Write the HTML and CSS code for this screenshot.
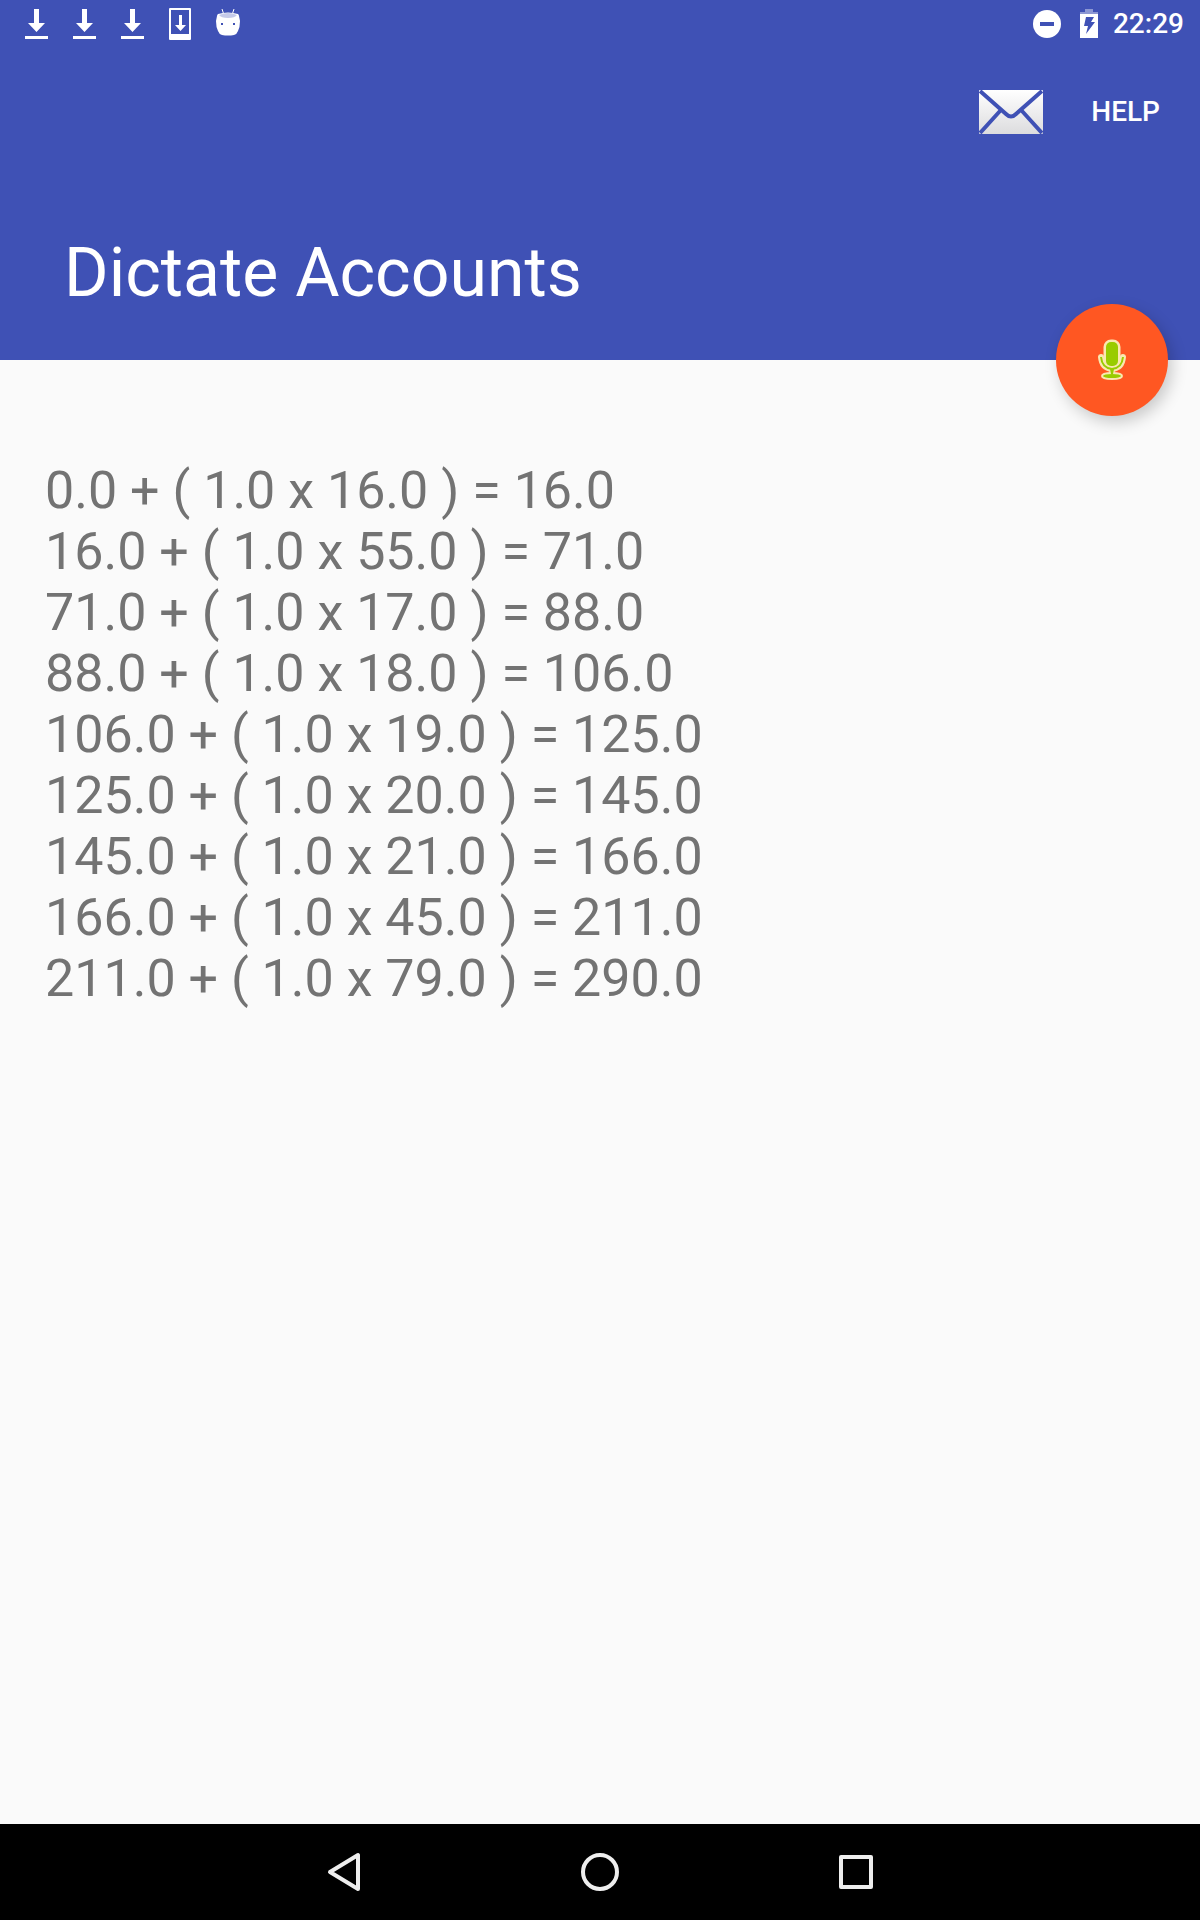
FILE: index.html
```html
<!DOCTYPE html>
<html lang="en">
<head>
    <meta charset="UTF-8">
    <meta name="viewport" content="width=device-width, initial-scale=1.0">
    <title>Dictate Accounts</title>
    <link rel="stylesheet" href="styles.css">
</head>
<body>
<header class="app-bar">
    <!-- Status bar -->
    <div class="status-bar">
        <div class="notifications">
            <svg viewBox="0 0 48 48"><path d="M22 9h5v14h6L24.500 32 16 23h6zM13 36h23v3H13z"/></svg>
            <svg viewBox="0 0 48 48"><path d="M22 9h5v14h6L24.500 32 16 23h6zM13 36h23v3H13z"/></svg>
            <svg viewBox="0 0 48 48"><path d="M22 9h5v14h6L24.500 32 16 23h6zM13 36h23v3H13z"/></svg>
            <svg viewBox="0 0 48 48"><path fill-rule="evenodd" d="M14 8h20q1 0 1 1v30q0 1-1 1H14q-1 0-1-1V9q0-1 1-1zm1 2v24h18V10zM23 15h3v10h4l-5.500 6-5.500-6h4z"/></svg>
            <svg viewBox="0 0 48 48">
                <path d="M18 9l2 6M30 9l-2 6" stroke="#fff" stroke-width="1"/>
                <path d="M13 16q0-1 1-2 10-3 20 0 1 1 1 2l1 5q0 6-2 10-1 3-4 4-6 1-12 0-3-1-4-4-2-4-2-10z"/>
                <path d="M15 15q9-4 18 0-2 3-9 3t-9-3z" fill="#c5cae9"/>
                <path d="M17 23h2v2h-2zM29 23h2v2h-2z" fill="#3f51b5"/>
            </svg>
        </div>
        <div class="system">
            <svg class="dnd" viewBox="0 0 28 28"><circle cx="14" cy="14" r="14"/><path d="M7 12h14v4H7z" fill="#3f51b5"/></svg>
            <svg class="battery" viewBox="0 0 20 30">
                <path d="M6 0h8v3h5v3H1V3h5z" fill="#8c97d3"/>
                <path d="M1 5h18v24H1z"/>
                <path d="M7 8h8l-3 5h4L7 25l2-8H5z" fill="#3f51b5"/>
            </svg>
            <span class="clock">22:29</span>
        </div>
    </div>

    <!-- Toolbar -->
    <div class="toolbar">
        <button class="mail-button" aria-label="Send mail">
            <svg viewBox="0 0 64 44">
                <defs>
                    <linearGradient id="paper" x1="0" y1="0" x2="0" y2="1">
                        <stop offset="0" stop-color="#fff"/>
                        <stop offset="1" stop-color="#dcdcde"/>
                    </linearGradient>
                </defs>
                <rect width="64" height="44" rx="1" fill="url(#paper)"/>
                <path d="M1 1l26 23q5 5 10 0L63 1M1 43l20-22M63 43L43 21" fill="none" stroke="#3f51b5" stroke-width="4"/>
            </svg>
        </button>
        <button class="help-button">HELP</button>
    </div>

    <h1>Dictate Accounts</h1>

    <button class="fab" aria-label="Dictate">
        <svg viewBox="0 0 28 42">
            <g fill="none" stroke="#f9e8b0" stroke-linecap="round">
                <rect x="8" y="3" width="12" height="24" rx="5" stroke-width="5"/>
                <path d="M3 18q1 11 11 12 10-1 11-12M14 30v5" stroke-width="6"/>
                <ellipse cx="14" cy="37" rx="9" ry="2" stroke-width="4"/>
            </g>
            <g fill="#99cc00" stroke="#99cc00">
                <rect x="8" y="3" width="12" height="24" rx="5" stroke="none"/>
                <path d="M3 18q1 11 11 12 10-1 11-12" fill="none" stroke-width="2"/>
                <path d="M12 30h4l-1 5h-2z" stroke="none"/>
                <ellipse cx="14" cy="37" rx="9" ry="2" stroke="none"/>
            </g>
        </svg>
    </button>
</header>

<main>
    <ul class="results">
        <li>0.0 + ( 1.0 x 16.0 ) = 16.0</li>
        <li>16.0 + ( 1.0 x 55.0 ) = 71.0</li>
        <li>71.0 + ( 1.0 x 17.0 ) = 88.0</li>
        <li>88.0 + ( 1.0 x 18.0 ) = 106.0</li>
        <li>106.0 + ( 1.0 x 19.0 ) = 125.0</li>
        <li>125.0 + ( 1.0 x 20.0 ) = 145.0</li>
        <li>145.0 + ( 1.0 x 21.0 ) = 166.0</li>
        <li>166.0 + ( 1.0 x 45.0 ) = 211.0</li>
        <li>211.0 + ( 1.0 x 79.0 ) = 290.0</li>
    </ul>
</main>

<!-- Navigation bar -->
<nav class="nav-bar">
    <button aria-label="Back"><svg viewBox="0 0 48 48"><path d="M38 7v34L10 24z"/></svg></button>
    <button aria-label="Home"><svg viewBox="0 0 48 48"><circle cx="24" cy="24" r="17"/></svg></button>
    <button aria-label="Recent apps"><svg viewBox="0 0 48 48"><rect x="9" y="9" width="30" height="30"/></svg></button>
</nav>
</body>
</html>
```
FILE: styles.css
```css
* {
    box-sizing: border-box;
}
body {
    margin: 0;
    min-height: 100vh;
    display: flex;
    flex-direction: column;
    background-color: #fafafa;
    font-family: Roboto, sans-serif;
}
button {
    padding: 0;
    border: none;
    background: none;
    color: inherit;
    font-family: inherit;
    cursor: pointer;
}
svg {
    display: block;
}
.app-bar {
    position: relative;
    padding-bottom: 47px;
    background-color: #3f51b5;
    color: #fff;
}
.status-bar {
    display: flex;
    justify-content: space-between;
    height: 48px;
    padding: 0 16px 0 12px;
}
.notifications,
.system {
    display: flex;
    align-items: center;
    fill: #fff;
}
.notifications svg {
    width: 48px;
    height: 48px;
}
.dnd {
    width: 28px;
    height: 28px;
    margin-right: 18px;
}
.battery {
    width: 20px;
    height: 30px;
    margin-right: 14px;
}
.clock {
    font-size: 28px;
    font-weight: 500;
    line-height: 50px;
}
.toolbar {
    display: flex;
    justify-content: flex-end;
    align-items: center;
    gap: 48px;
    height: 128px;
    padding-right: 40px;
}
.mail-button svg {
    width: 64px;
    height: 44px;
}
.help-button {
    font-size: 28px;
    font-weight: 500;
    line-height: 34px;
}
h1 {
    margin: 57px 64px 0;
    font-size: 68px;
    font-weight: 400;
    line-height: 80px;
}
/* sits over the bottom edge of the app bar */
.fab {
    position: absolute;
    right: 32px;
    bottom: -56px;
    width: 112px;
    height: 112px;
    display: flex;
    justify-content: center;
    align-items: center;
    border-radius: 50%;
    background-color: #ff5722;
    box-shadow: 4px 6px 16px rgba(0, 0, 0, 0.2);
}
.fab svg {
    width: 28px;
    height: 42px;
}
main {
    flex: 1;
    padding: 100px 45px;
}
.results {
    margin: 0;
    padding: 0;
    list-style: none;
    color: #737373;
    font-size: 52px;
    line-height: 61px;
}
.nav-bar {
    display: flex;
    justify-content: center;
    gap: 128px;
    height: 96px;
    background-color: #000;
}
.nav-bar button {
    width: 128px;
    display: flex;
    justify-content: center;
    align-items: center;
}
.nav-bar svg {
    width: 48px;
    height: 48px;
    fill: none;
    stroke: #eee;
    stroke-width: 4;
    stroke-linejoin: round;
}
```
